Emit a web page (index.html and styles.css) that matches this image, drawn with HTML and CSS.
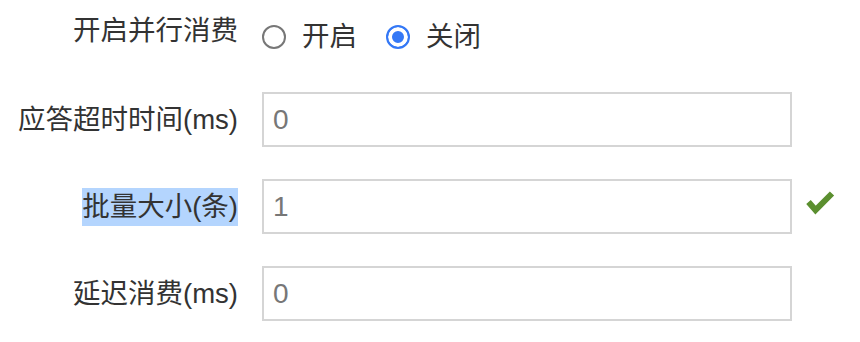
FILE: index.html
```html
<!DOCTYPE html>
<html lang="zh-CN">
<head>
<meta charset="utf-8">
<link rel="stylesheet" href="styles.css">
</head>
<body>
<form class="form">
  <div class="row row-radio">
    <label class="label">开启并行消费</label>
    <div class="radios">
      <label class="radio"><span class="circle"></span><span class="radio-text">开启</span></label>
      <label class="radio"><span class="circle checked"></span><span class="radio-text">关闭</span></label>
    </div>
  </div>
  <div class="row">
    <label class="label">应答超时时间(ms)</label>
    <div class="input">0</div>
  </div>
  <div class="row">
    <label class="label"><span class="selected">批量大小(条)</span></label>
    <div class="input">1</div>
    <svg class="check" width="30" height="26" viewBox="0 0 30 26"><polyline points="3.5,13 10.5,21 27,4.5" fill="none" stroke="#5b8f2f" stroke-width="6" stroke-linejoin="miter" stroke-linecap="butt"/></svg>
  </div>
  <div class="row">
    <label class="label">延迟消费(ms)</label>
    <div class="input">0</div>
  </div>
</form>
</body>
</html>
```
FILE: styles.css
```css
* { box-sizing: border-box; }
html, body { margin: 0; background: #fff; }
body {
  font-family: "Liberation Sans", "Noto Sans CJK SC", sans-serif;
  font-size: 27.5px;
  color: #333;
}
.form {
  padding-top: 12px;
  display: flex;
  flex-direction: column;
  gap: 32px;
}
.row {
  display: flex;
  align-items: center;
  height: 55px;
}
.row-radio {
  height: 48px;
  align-items: flex-start;
}
.label {
  width: 238px;
  text-align: right;
  margin-right: 24px;
  line-height: 38px;
  flex: none;
}
.selected {
  background: #b4d5fe;
  padding: 3px 0 4px;
}
.radios {
  display: flex;
  margin-top: 6px;
  line-height: 38px;
}
.radio {
  display: flex;
  align-items: center;
  margin-right: 29px;
}
.circle {
  width: 24px;
  height: 24px;
  border: 2px solid #777;
  border-radius: 50%;
  margin-right: 16px;
  background: #fff;
}
.circle.checked {
  border-color: #3478f6;
  background: #3478f6;
  box-shadow: inset 0 0 0 4px #fff;
}
.input {
  width: 530px;
  height: 55px;
  border: 2px solid #d5d5d5;
  padding-left: 9px;
  line-height: 51px;
  font-size: 28px;
  color: #777;
  flex: none;
}
.check {
  margin-left: 13px;
  margin-bottom: 9px;
  flex: none;
}
```
